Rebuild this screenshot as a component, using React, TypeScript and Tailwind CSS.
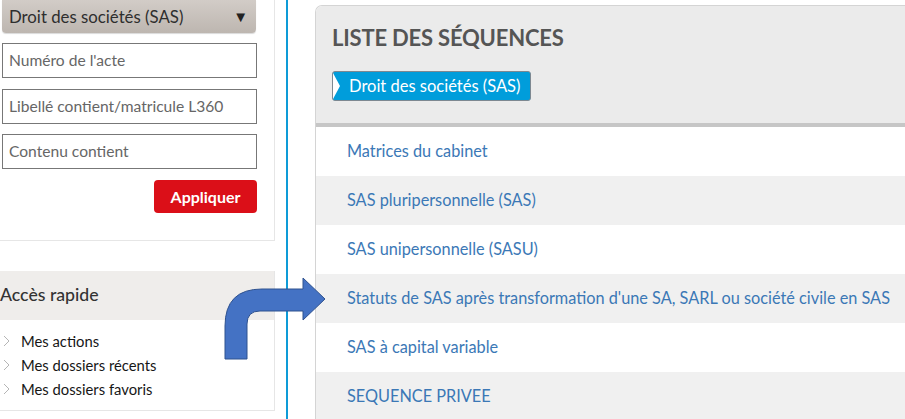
import React from 'react';

const sequences: string[] = [
  'Matrices du cabinet',
  'SAS pluripersonnelle (SAS)',
  'SAS unipersonnelle (SASU)',
  "Statuts de SAS après transformation d'une SA, SARL ou société civile en SAS",
  'SAS à capital variable',
  'SEQUENCE PRIVEE',
];

const quickLinks: string[] = ['Mes actions', 'Mes dossiers récents', 'Mes dossiers favoris'];

const Chevron = () => (
  <svg width="8" height="12" viewBox="0 0 8 12" className="shrink-0">
    <polyline points="1,1 6,6 1,11" fill="none" stroke="#b5b5b5" strokeWidth="1" />
  </svg>
);

const App: React.FC = (): React.ReactElement => {
  return (
    <div className="relative flex w-[905px] h-[419px] overflow-hidden bg-white font-['Lato','Open_Sans',sans-serif]">
      {/* Left sidebar */}
      <aside className="w-[275px] shrink-0 flex flex-col">
        <div className="border-r border-b border-[#e6e6e6] pl-[2px] pr-[17px] pb-[27px]">
          <div className="h-[33px] rounded-b-[4px] bg-gradient-to-b from-[#d2ccc7] to-[#bdb6b0] shadow-[0_1px_1px_rgba(0,0,0,0.15)] flex items-center justify-between pl-[7px] pr-[8px] mr-[1px]">
            <span className="text-[16.8px] text-[#2e2e2e]">Droit des sociétés (SAS)</span>
            <span className="text-[15px] text-[#222]">▼</span>
          </div>
          <div className="mt-[10px] h-[35px] border border-[#777] flex items-center pl-[6px] text-[15.6px] text-[#666]">Numéro de l'acte</div>
          <div className="mt-[11px] h-[35px] border border-[#777] flex items-center pl-[6px] text-[15.6px] text-[#666]">Libellé contient/matricule L360</div>
          <div className="mt-[10px] h-[35px] border border-[#777] flex items-center pl-[6px] text-[15.6px] text-[#666]">Contenu contient</div>
          <div className="mt-[11px] flex justify-end">
            <button className="w-[103px] h-[33px] rounded-[4px] bg-[#db0f18] text-white font-bold text-[16px]">Appliquer</button>
          </div>
        </div>

        <div className="mt-[30px] border-r border-b border-[#e6e6e6]">
          <div className="h-[49px] bg-[#efedeb] flex items-center text-[17.7px] text-[#333] font-medium">Accès rapide</div>
          <ul className="pt-[9px] pb-[9px]">
            {quickLinks.map((link) => (
              <li key={link} className="h-[24px] flex items-center pl-[3px] gap-[10px] text-[14.8px] text-[#161616]">
                <Chevron />
                <span>{link}</span>
              </li>
            ))}
          </ul>
        </div>
      </aside>

      {/* Separator */}
      <div className="ml-[11px] w-[2px] h-full bg-[#0e9bd7] shrink-0" />

      {/* Sequence list */}
      <main className="ml-[27px] mt-[5px] flex-1 border-l border-t border-[#d4d4d4] rounded-tl-[7px] overflow-hidden">
        <div className="bg-[#ebebeb] border-b-4 border-[#c6c6c6] pl-[16px] pt-[19px] pb-[22px]">
          <h2 className="text-[22px] leading-[25px] font-bold text-[#555] tracking-[-0.2px]">LISTE DES SÉQUENCES</h2>
          <div className="relative mt-[21px] w-[199px] h-[30px] rounded-[3px] border border-[#7d8891] bg-[#009ddb] flex items-center pl-[16px] text-white text-[16.5px]">
            <svg width="8" height="26" viewBox="0 0 8 26" className="absolute left-0 top-[1px]">
              <polygon points="0,0 7,13 0,26" fill="#fff" />
            </svg>
            Droit des sociétés (SAS)
          </div>
        </div>
        <ul>
          {sequences.map((s, i) => (
            <li
              key={s}
              className={`h-[49px] flex items-center pl-[31px] text-[16.3px] text-[#3b78b6] whitespace-nowrap ${i % 2 === 1 ? 'bg-[#f0f0f0]' : 'bg-white'}`}
            >
              {s}
            </li>
          ))}
        </ul>
      </main>

      {/* Bent arrow callout */}
      <svg className="absolute left-0 top-0 pointer-events-none" width="905" height="419" viewBox="0 0 905 419">
        <path
          d="M225 359 L225 326 Q225 289 262 289 L303 289 L303 278 L325 299 L303 320 L303 311 L260 311 Q247 311 247 324 L247 359 Z"
          fill="#4472c4"
          stroke="#2f528f"
          strokeWidth="1"
        />
      </svg>
    </div>
  );
};

export default App;
